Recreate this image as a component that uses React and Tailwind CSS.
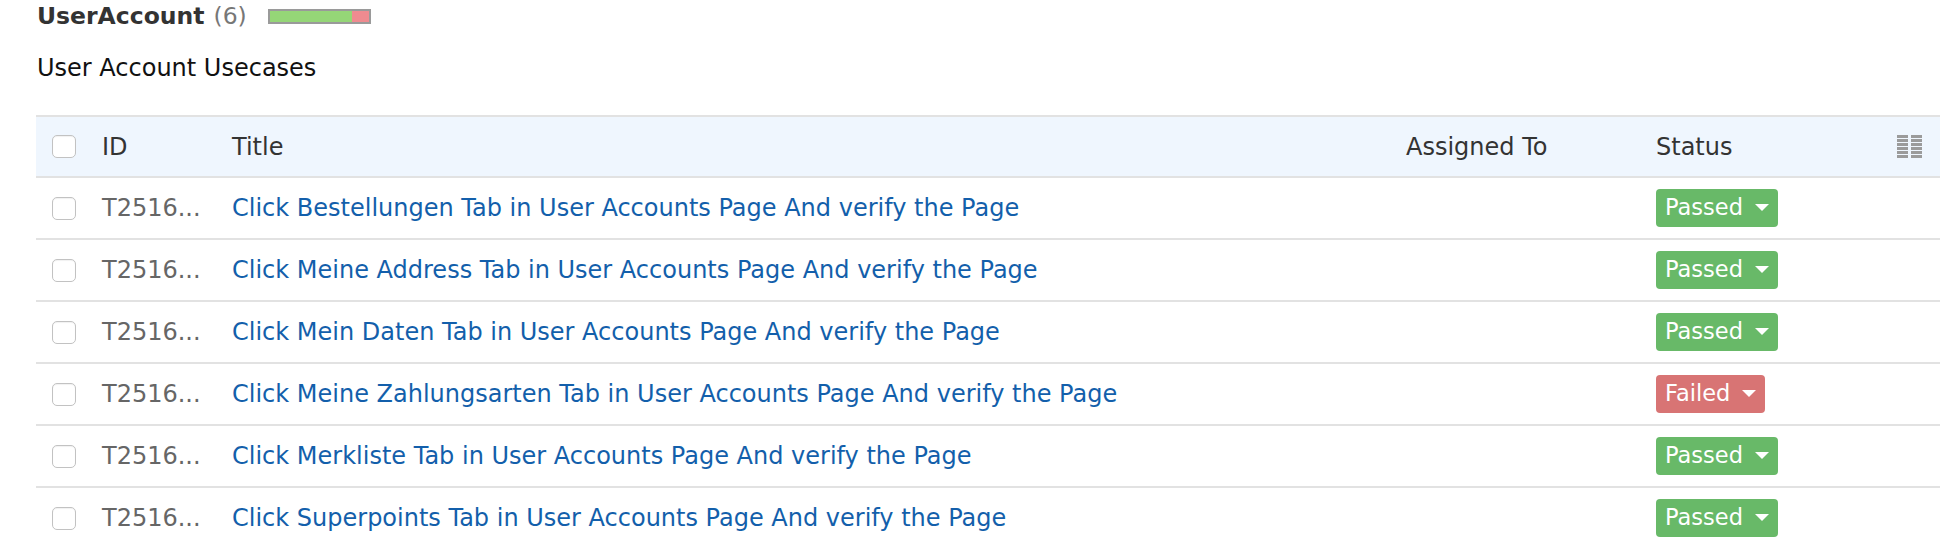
import React from "react";

const rows = [
  { id: "T2516...", title: "Click Bestellungen Tab in User Accounts Page And verify the Page", status: "Passed" },
  { id: "T2516...", title: "Click Meine Address Tab in User Accounts Page And verify the Page", status: "Passed" },
  { id: "T2516...", title: "Click Mein Daten Tab in User Accounts Page And verify the Page", status: "Passed" },
  { id: "T2516...", title: "Click Meine Zahlungsarten Tab in User Accounts Page And verify the Page", status: "Failed" },
  { id: "T2516...", title: "Click Merkliste Tab in User Accounts Page And verify the Page", status: "Passed" },
  { id: "T2516...", title: "Click Superpoints Tab in User Accounts Page And verify the Page", status: "Passed" },
];

const cols = "grid grid-cols-[66px_130px_1174px_250px_1fr] items-center";

function Checkbox() {
  return (
    <span className="block w-[24px] h-[23px] rounded-[5px] border-[1.5px] border-[#c2c2c2] bg-white shadow-[inset_0_1px_1px_rgba(0,0,0,0.06)]" />
  );
}

function ColumnsIcon() {
  const bars = [0, 1, 2, 3, 4, 5];
  return (
    <svg width="26" height="24" viewBox="0 0 26 24">
      {bars.map((b) => (
        <g key={b}>
          <rect x="0" y={b * 4} width="11" height="3" fill="#9b9b9b" />
          <rect x="14" y={b * 4} width="11" height="3" fill="#9b9b9b" />
        </g>
      ))}
    </svg>
  );
}

function StatusBadge({ status }) {
  const passed = status === "Passed";
  return (
    <span
      className={
        "inline-flex items-center h-[38px] pl-[9px] pr-[9px] rounded-[4px] text-white text-[22.5px] gap-[12px] " +
        (passed ? "bg-[#68b968]" : "bg-[#d87474]")
      }
    >
      {status}
      <svg width="14" height="8" viewBox="0 0 14 8">
        <path d="M0 0 L14 0 L7 7 Z" fill="#fff" />
      </svg>
    </span>
  );
}

export default function App() {
  return (
    <div className="w-[1948px] h-[544px] overflow-hidden bg-white font-['DejaVu_Sans',Verdana,sans-serif] text-[24px]">
      <div className="pl-[37px] pt-[2px] flex items-center leading-[28px] text-[23.5px]">
        <span className="font-bold text-[#333]">UserAccount</span>
        <span className="ml-[9px] text-[#777]">(6)</span>
        <span className="ml-[21px] flex w-[103px] h-[15px] border-2 border-[#9a9a9a]">
          <span className="w-[82px] bg-[#95d677]" />
          <span className="flex-1 bg-[#ef8b90]" />
        </span>
      </div>
      <div className="pl-[37px] mt-[24px] leading-[28px] text-[#111]">User Account Usecases</div>

      <div className="ml-[36px] w-[1904px] mt-[33px]">
        <div className={cols + " h-[63px] border-y-2 border-[#e2e2e2] bg-[#eff6fe] text-[#333]"}>
          <div className="pl-[16px]">
            <Checkbox />
          </div>
          <div>ID</div>
          <div>Title</div>
          <div>Assigned To</div>
          <div className="flex items-center justify-between pr-[17px]">
            <span>Status</span>
            <ColumnsIcon />
          </div>
        </div>
        {rows.map((r, i) => (
          <div key={i} className={cols + " h-[62px] border-b-2 border-[#e2e2e2]"}>
            <div className="pl-[16px]">
              <Checkbox />
            </div>
            <div className="text-[#666]">{r.id}</div>
            <div className="text-[#135fab]">{r.title}</div>
            <div />
            <div>
              <StatusBadge status={r.status} />
            </div>
          </div>
        ))}
      </div>
    </div>
  );
}
